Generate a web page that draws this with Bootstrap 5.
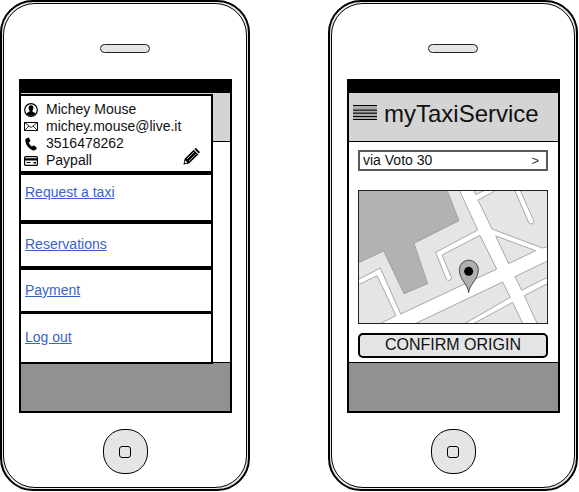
<!DOCTYPE html>
<html lang="en">
<head>
<meta charset="utf-8">
<meta name="viewport" content="width=device-width, initial-scale=1">
<title>myTaxiService</title>
<link href="https://cdn.jsdelivr.net/npm/bootstrap@5.3.0/dist/css/bootstrap.min.css" rel="stylesheet">
<style>
  body { font-family: "Liberation Sans", Arial, sans-serif; font-size: 14px; line-height: 17px; color: #111; background: #fff; }
  .phones { gap: 78px; padding-right: 1px; }
  .phone { flex: 1 1 0; min-width: 220px; max-width: 250px; border: 2px solid #000; border-radius: 33px; background: #e5e5e5; padding: 1px; }
  .phone-face { border: 1px solid #000; border-radius: 32px; background: #fff; padding: 40px 14px 13px; }
  .speaker { width: 50px; height: 9px; border: 1px solid #222; border-radius: 5px; background: #e5e5e5; margin-bottom: 26px; }
  .screen { border: 2px solid #000; margin: 0 0 16px 1px; }
  .status-strip { height: 12px; background: #000; }
  .app-header { min-height: 49px; background: #d4d4d4; border-bottom: 1px solid #000; padding: 7px 4px 0; gap: 7px; }
  .app-title { font-size: 24px; line-height: 28px; }
  .app-body { min-height: 220px; padding: 8px 10px 4px 9px; }
  .app-foot { height: 49px; background: #919191; border-top: 1px solid #000; }
  .home-btn { width: 45px; height: 45px; border: 1px solid #000; border-radius: 21px; background: #e5e5e5; }
  .home-btn span { width: 12px; height: 12px; border: 1px solid #000; border-radius: 3px; }
  .side-menu { top: 13px; left: 0; right: 17px; background: #fff; border: solid #000; border-width: 2px 2px 2px 0; }
  .profile { padding: 5px 10px 2px 3px; }
  .profile li { gap: 8px; }
  .edit-btn { right: 11px; bottom: 6px; }
  .menu-row { border-top: 4px solid #000; padding-left: 4px; }
  .menu-row a { color: #3a63c8; }
  .row-request { height: 49px; padding-bottom: 10px; }
  .row-mid { height: 46px; padding-bottom: 2px; }
  .row-last { height: 51px; border-top-width: 3px; padding-bottom: 2px; }
  .row-pay { height: 45px; }
  .address { border: 2px solid #5a5a5a; height: 21px; padding: 0 7px 0 3px; margin-bottom: 19px; }
  .address input { min-width: 0; outline-offset: 2px; color: #111; }
  .address button { font-size: 13px; line-height: 17px; color: #333; }
  .map { margin-bottom: 9px; }
  .confirm { height: 25px; border: 2px solid #000; border-radius: 5px; background: #e5e5e5; font-size: 16px; line-height: 18px; padding: 0 0 2px; color: #111; }
</style>
</head>
<body>
<main class="phones d-flex">

  <section class="phone" aria-label="Menu screen">
    <div class="phone-face">
      <div class="speaker mx-auto"></div>
      <div class="screen position-relative">
        <div class="status-strip"></div>
        <div class="app-header"></div>
        <div class="app-body"></div>
        <div class="app-foot"></div>
        <nav class="side-menu position-absolute">
          <div class="profile position-relative">
            <ul class="list-unstyled mb-0">
              <li class="d-flex align-items-center">
                <svg width="14" height="14" viewBox="0 0 14 14" aria-hidden="true"><circle cx="7" cy="7" r="6.3" fill="#fff" stroke="#000" stroke-width="1.2"/><path d="M7 2.2c1.7 0 2.5 1.2 2.4 2.8-.1 1.300-.6 2-.9 2.600v1c.2.7 2.200.8 2.900 1.900C10.400 12 8.800 12.800 7 12.800S3.600 12 2.600 10.500c.7-1.100 2.700-1.200 2.900-1.900v-1c-.3-.6-.8-1.300-.9-2.600C4.500 3.400 5.300 2.200 7 2.200z"/></svg>
                <span>Michey Mouse</span>
              </li>
              <li class="d-flex align-items-center">
                <svg width="14" height="9" viewBox="0 0 14 9" fill="none" stroke="#000" aria-hidden="true"><path d="M.5.5h13v8H.5z"/><path d="M.5.5 7 5.500 13.500.5M.5 8.500l4.500-4.500M13.500 8.500 9 4" stroke-width=".8"/></svg>
                <span>michey.mouse@live.it</span>
              </li>
              <li class="d-flex align-items-center">
                <svg width="14" height="14" viewBox="0 0 14 14" aria-hidden="true"><path d="M2.300 1.600 4.200.5c.4-.2.700 0 .9.400l1.200 2.600c.1.400 0 .7-.3.900l-1.100.8c.3 1.700 1.600 3.400 3.200 4.200l1.200-.8c.3-.2.700-.2 1 .1l2.300 1.800c.3.300.3.600.1.900l-1.400 1.700c-.6.500-1.400.5-2.200.3C5.200 12.200 1.800 8 1.300 3.700c-.1-.9.300-1.700 1-2.100z"/></svg>
                <span>3516478262</span>
              </li>
              <li class="d-flex align-items-center">
                <svg width="14" height="10" viewBox="0 0 14 10" aria-hidden="true"><rect x=".6" y=".6" width="12.800" height="8.800" rx="1" fill="#fff" stroke="#000" stroke-width="1.200"/><path d="M1 2.300h12v2.200H1zM2.500 6h4v1h-4zM9.500 6H12v1.500H9.500z"/></svg>
                <span>Paypall</span>
              </li>
            </ul>
            <button type="button" class="edit-btn position-absolute btn p-0 border-0 d-flex" aria-label="Edit profile">
              <svg width="17" height="17" viewBox="0 0 17 17" aria-hidden="true"><path d="M.5 16.500 1.600 10.800 10.600 1.700l4.700 4.700-9.400 9.200z"/><path d="M11.300 1.100 12.200.4c.4-.4.900-.4 1.300 0l3 3c.4.400.4.900 0 1.300l-.8.900z"/><path d="M3.900 11.100 11 4M6 13.100 13 6.100" stroke="#fff" stroke-width=".7"/><path d="m2.300 12.500 2.100 2.100-2 .6-.7-.7z" fill="#fff"/></svg>
            </button>
          </div>
          <div class="menu-row row-request d-flex align-items-center"><a href="#request">Request a taxi</a></div>
          <div class="menu-row row-mid d-flex align-items-center"><a href="#reservations">Reservations</a></div>
          <div class="menu-row row-pay d-flex align-items-center"><a href="#payment">Payment</a></div>
          <div class="menu-row row-last d-flex align-items-center"><a href="#logout">Log out</a></div>
        </nav>
      </div>
      <button type="button" class="home-btn p-0 mx-auto d-flex align-items-center justify-content-center" aria-label="Home"><span></span></button>
    </div>
  </section>

  <section class="phone" aria-label="Origin screen">
    <div class="phone-face">
      <div class="speaker mx-auto"></div>
      <div class="screen">
        <div class="status-strip"></div>
        <header class="app-header d-flex align-items-start">
          <button type="button" class="btn p-0 border-0 rounded-0 d-flex mt-1" aria-label="Open menu">
            <svg width="24" height="16" viewBox="0 0 24 16" aria-hidden="true"><path fill="#aaa" d="M0 1h24v15H0z"/><path fill="#666" d="M0 5h24v1H0zM0 8h24v1H0z"/><path fill="#333" d="M0 6h24v1H0zM0 9h24v1H0z"/><path d="M0 1h24v1H0zM0 12h24v1H0zM0 15h24v1H0z"/></svg>
          </button>
          <h1 class="app-title fw-normal mb-0">myTaxiService</h1>
        </header>
        <form class="app-body">
          <div class="address d-flex align-items-center">
            <input type="text" class="flex-grow-1 border-0 p-0 bg-transparent" aria-label="Origin address" value="via Voto 30">
            <button type="button" class="border-0 p-0 bg-transparent" aria-label="Find address">&gt;</button>
          </div>
          <svg class="map d-block w-100" viewBox="24 30 570 402" role="img" aria-label="Street map with the origin pin">
            <rect x="24" y="30" width="570" height="402" fill="#fff"/>
            <g fill="#e5e5e5" stroke="#999" stroke-width="2.500">
              <path d="M24 30H328L383 150 257 217 289 297A8 8 0 0 0 304 292L276 225 390 166 440 267 152 402 91 264 24 299z"/>
              <path d="M24 315 81 287 138 407 88 432H24z"/>
              <path d="M193 432 458 306 481 352 342 432z"/>
              <path d="M368 432 488 367 519 432z"/>
              <path d="M495 290 594 242V291L515 331z"/>
              <path d="M523 347 594 310V432H562z"/>
              <path d="M437 168 557 212 476 251z"/>
              <path d="M384 60 440 30H494L536 127A8 8 0 0 0 551 121L510 30H594V200L577 204 426 147z"/>
              <path d="M371 30 377 44 406 30z"/>
              <path d="M24 30H291L327 122 192 190 233 311 162 341 101 213 24 249z" fill="#b2b2b2"/>
            </g>
            <path d="M356 338C354 312 328 300 328 269A28 28 0 0 1 385 269C385 300 358 312 356 338z" fill="#b0b0b0" stroke="#333" stroke-width="2.500"/>
            <circle cx="356" cy="274" r="13.500"/>
            <rect x="25.500" y="31.500" width="567" height="399" fill="none" stroke="#222" stroke-width="3"/>
          </svg>
          <button type="submit" class="confirm w-100 d-block">CONFIRM ORIGIN</button>
        </form>
        <div class="app-foot"></div>
      </div>
      <button type="button" class="home-btn p-0 mx-auto d-flex align-items-center justify-content-center" aria-label="Home"><span></span></button>
    </div>
  </section>

</main>
<script src="https://cdn.jsdelivr.net/npm/bootstrap@5.3.0/dist/js/bootstrap.bundle.min.js"></script>
</body>
</html>
